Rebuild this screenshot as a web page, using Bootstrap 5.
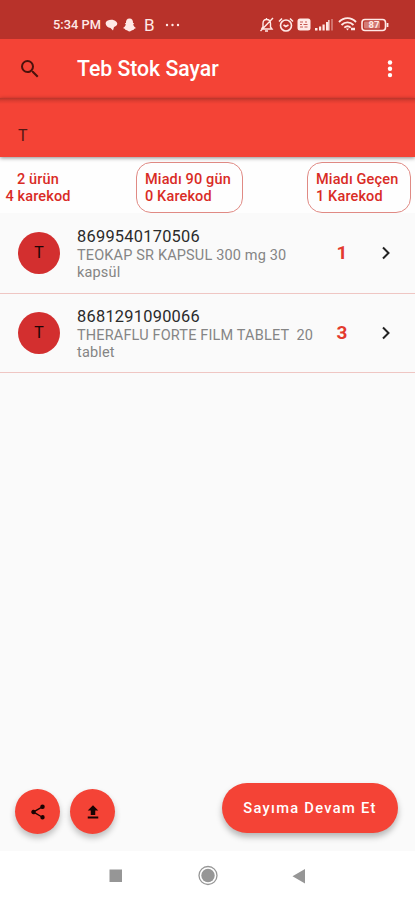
<!DOCTYPE html>
<html lang="tr">
<head>
<meta charset="utf-8">
<meta name="viewport" content="width=device-width, initial-scale=1">
<title>Teb Stok Sayar</title>
<link href="https://cdn.jsdelivr.net/npm/bootstrap@5.3.0/dist/css/bootstrap.min.css" rel="stylesheet">
<style>
body{font-family:Roboto,"Liberation Sans",sans-serif;background:#fafafa;height:900px;overflow:hidden;color:#212121}
svg{display:block;flex:none}
.status-bar{height:39px;background:#b8322a;color:#ffe9e6;padding:10px 26px 0 53px;font-size:12.8px;font-weight:500}
.status-bar .clock{width:52px;letter-spacing:.05px;white-space:nowrap}
.snap-icon{margin-right:9px}
.app-glyph{font-size:17px;font-weight:400;width:20px;line-height:16px;margin-left:-2px}
.alarm-icon{margin-left:4px}.nfc-icon{margin-left:3px}.signal-icon{margin-left:4px}.wifi-icon{margin-left:5px}.battery-icon{margin-left:4px}
.app-bar{height:59px;background:#f44336;padding:0 18px 0 18px}
.app-title{font-size:21.2px;font-weight:500;color:#fff;margin-left:35px;line-height:26px}
.search-strip{height:59px;background:linear-gradient(#b9352b,#e03d31 3px,#f44336 6px);padding:28px 18px 0;font-size:16px;line-height:20px;box-shadow:0 1px 4px rgba(0,0,0,.45);color:#541713}
.stats{height:56px;background:#fefefe;padding:5px 4px 0 5px;color:#d92b25;font-size:14.5px;letter-spacing:.14px;line-height:17px;font-weight:500}
.stat-total{padding-top:9px;width:66px;white-space:nowrap}
.stat-box{height:51px;border:1px solid #e08a84;border-radius:15px;padding:8px 8px 0;white-space:nowrap}
.stat-near{width:107px;margin-left:65px}
.stat-past{width:104px}
.stock-row{height:79px;border-bottom:1px solid #efc6c3;padding:0 20px 0 18px}
.stock-row:first-child{height:81px}
.avatar{width:42px;height:42px;background:#d32f2f;font-size:16px;color:#210505;flex:none}
.stock-text{width:244px;margin-left:17px;margin-top:1px;font-size:14.5px;letter-spacing:.16px;line-height:17px;color:#858585;flex:none}
.stock-code{font-size:16.4px;line-height:20px;letter-spacing:.25px;color:#2b2b2b}
.stock-name{white-space:pre-line}
.stock-count{width:42px;font-size:19px;font-weight:700;color:#e33a2e}
.bottom-actions{height:69px;padding:0 17px 0 15px;gap:10px}
.round-btn,.round-btn:hover{width:45px;height:45px;background:#f44336;color:#180403;border:0;margin-top:7px;box-shadow:0 4px 6px rgba(0,0,0,.24)}
.resume-btn,.resume-btn:hover{width:176px;height:50px;margin-top:1px;background:#f44336;color:#fff;border:0;font-size:14.7px;font-weight:500;letter-spacing:1.28px;box-shadow:0 4px 6px rgba(0,0,0,.28);white-space:nowrap}
.system-nav{height:49px;background:#fff;padding-left:104px}
</style>
<script src="https://cdn.jsdelivr.net/npm/bootstrap@5.3.0/dist/js/bootstrap.bundle.min.js"></script>
</head>
<body class="d-flex flex-column">
<div class="status-bar d-flex align-items-center">
  <span class="clock">5:34 PM</span>
  <svg width="13" height="12" viewBox="0 0 13 12" fill="currentColor"><path d="M.8 3.500C2 0 9 0 11 2.500 14 5 11 7.500 9 8l-1 3.500L5.500 9C2.500 8.500 0 6 .8 3.500Z"/></svg>
  <svg class="ms-1 snap-icon" width="15" height="14" viewBox="0 0 15 14" fill="currentColor"><path d="M7.500.5C5 .5 3.800 2.500 4 5l-1.200.3 1 1.200C3.300 8.500 2 9.300 1 10l2 1 .5 1c2-.2 2.500 1.500 4 1.500s2-1.700 4-1.500l.5-1 2-1c-1-.7-2.300-1.500-2.800-3.500l1-1.200L11 5C11.200 2.500 10 .5 7.500.5Z"/></svg>
  <span class="app-glyph">B</span>
  <svg width="16" height="4" fill="currentColor"><circle cx="3" cy="2" r="1.200"/><circle cx="8.500" cy="2" r="1.200"/><circle cx="14" cy="2" r="1.200"/></svg>
  <div class="d-flex align-items-center ms-auto">
    <svg width="15" height="16" viewBox="0 0 15 16" fill="none" stroke="currentColor" stroke-width="1.400"><path d="M2.500 12h10.500L11.500 10V6.500C11.500 4 10 2.500 7.500 2.500S4 4 4 6.500V10l-1.500 2M7.500 1v1.500M6 14h3M1.500 14 14 1"/></svg>
    <svg class="alarm-icon" width="16" height="16" viewBox="0 0 16 16" fill="none" stroke="currentColor" stroke-width="1.600"><circle cx="8" cy="8.500" r="5.500"/><path d="M1 4.500 4 1.500M15 4.500l-3-3M5.500 8l2.300 1.500L10.500 8"/></svg>
    <svg class="nfc-icon" width="14" height="13" viewBox="0 0 14 13"><rect x=".5" y=".5" width="13" height="12" rx="2.500" fill="currentColor"/><path d="M3 4h3m2 0h2M3 6.500h2m1.500 0h4M3 9h3m1.500 0h3" stroke="#b8322a" opacity=".8"/></svg>
    <svg class="signal-icon" width="18" height="13" viewBox="0 0 18 13" fill="currentColor"><path d="M0 10h2.500v2.500H0zM4 8.500h2.200v4H4zM7.500 6.500h2.200v6H7.500zM11 4h2.200v8.500H11z"/><path d="M13.200 2h1.300v10.500h-1.300z"/><path opacity=".35" d="M16 1h2v11.500h-2z"/></svg>
    <svg class="wifi-icon" width="19" height="15" viewBox="0 0 19 15" fill="none" stroke="currentColor" stroke-width="1.900"><path d="M1 5C6-.2 13-.2 18 5M3.500 8c3.500-3.500 8.500-3.500 12 0M6.300 10.600c2-1.700 4.500-1.700 6.400 0"/><path d="m9.500 13.500-1.500-2h3z" fill="currentColor" stroke="none"/><path d="M13 12h4" stroke-width="2.500"/></svg>
    <svg class="battery-icon" width="28" height="14" viewBox="0 0 28 14"><rect x="1" y="1.500" width="23.500" height="11" rx="3" fill="none" stroke="currentColor" stroke-width="1.600"/><rect x="3" y="3.500" width="16" height="7" rx="1" fill="currentColor" opacity=".4"/><path d="M26.500 5v4" stroke="currentColor" stroke-width="1.800"/><text x="7.500" y="10.300" font-size="9.500" font-weight="700" fill="currentColor">87</text></svg>
  </div>
</div>
<header class="app-bar d-flex align-items-center">
  <svg width="24" height="24" viewBox="0 0 24 24" fill="#4a120c"><path d="M15.500 14h-.79l-.28-.27A6.470 6.470 0 0 0 16 9.500 6.500 6.500 0 1 0 9.500 16c1.610 0 3.090-.59 4.230-1.570l.27.28v.79l5 4.990L20.490 19l-4.990-5zm-6 0C7.010 14 5 11.990 5 9.500S7.010 5 9.500 5 14 7.010 14 9.500 11.990 14 9.500 14z"/></svg>
  <div class="app-title">Teb Stok Sayar</div>
  <svg class="ms-auto" width="14" height="20" viewBox="0 0 14 20" fill="#fff"><circle cx="7" cy="3.500" r="2.200"/><circle cx="7" cy="9.800" r="2.200"/><circle cx="7" cy="16.100" r="2.200"/></svg>
</header>
<div class="search-strip position-relative">T</div>
<section class="stats d-flex">
  <div class="text-center stat-total">2 ürün<br>4 karekod</div>
  <div class="stat-box stat-near">Miadı 90 gün<br>0 Karekod</div>
  <div class="stat-box stat-past ms-auto">Miadı Geçen<br>1 Karekod</div>
</section>
<main class="flex-grow-1">
  <div class="stock-row d-flex align-items-center">
    <div class="avatar rounded-circle d-flex align-items-center justify-content-center">T</div>
    <div class="stock-text"><div class="stock-code">8699540170506</div><div class="stock-name">TEOKAP SR KAPSUL 300 mg 30
kapsül</div></div>
    <div class="stock-count text-center">1</div>
    <svg class="ms-auto" width="18" height="18" viewBox="0 0 18 18" fill="none" stroke="#222" stroke-width="2"><path d="m6 3.500 5.500 5.500L6 14.500"/></svg>
  </div>
  <div class="stock-row d-flex align-items-center">
    <div class="avatar rounded-circle d-flex align-items-center justify-content-center">T</div>
    <div class="stock-text"><div class="stock-code">8681291090066</div><div class="stock-name">THERAFLU FORTE FILM TABLET &nbsp;20
tablet</div></div>
    <div class="stock-count text-center">3</div>
    <svg class="ms-auto" width="18" height="18" viewBox="0 0 18 18" fill="none" stroke="#222" stroke-width="2"><path d="m6 3.500 5.500 5.500L6 14.500"/></svg>
  </div>
</main>
<div class="bottom-actions d-flex align-items-start">
  <button class="btn round-btn rounded-circle p-0 d-flex align-items-center justify-content-center" aria-label="Paylaş"><svg width="18" height="18" viewBox="0 0 24 24" fill="currentColor"><path d="M18 16.080c-.76 0-1.440.3-1.960.77L8.910 12.700c.05-.23.090-.46.090-.7s-.04-.47-.09-.7l7.050-4.110c.54.5 1.250.81 2.040.81a3 3 0 1 0-3-3c0 .24.040.47.090.7L8.040 9.810A3 3 0 1 0 6 15c.79 0 1.500-.31 2.040-.81l7.120 4.160c-.05.21-.08.43-.08.65A2.920 2.920 0 1 0 18 16.080z"/></svg></button>
  <button class="btn round-btn rounded-circle p-0 d-flex align-items-center justify-content-center" aria-label="Yükle"><svg width="18" height="18" viewBox="0 0 24 24" fill="currentColor"><path d="M9 16h6v-6h4l-7-7-7 7h4zm-4 2h14v2.500H5z"/></svg></button>
  <button class="btn resume-btn rounded-pill p-0 ms-auto">Sayıma Devam Et</button>
</div>
<nav class="system-nav d-flex align-items-center">
  <svg width="208" height="24" viewBox="0 0 208 24"><g fill="#969696"><path d="M5.500 5.500H18V18H5.500zM201 5v14.500l-12.500-7.200z"/><circle cx="104" cy="11.500" r="6.700"/></g><circle cx="104" cy="11.500" r="9" fill="none" stroke="#969696" stroke-width="1.300"/></svg>
</nav>
</body>
</html>
